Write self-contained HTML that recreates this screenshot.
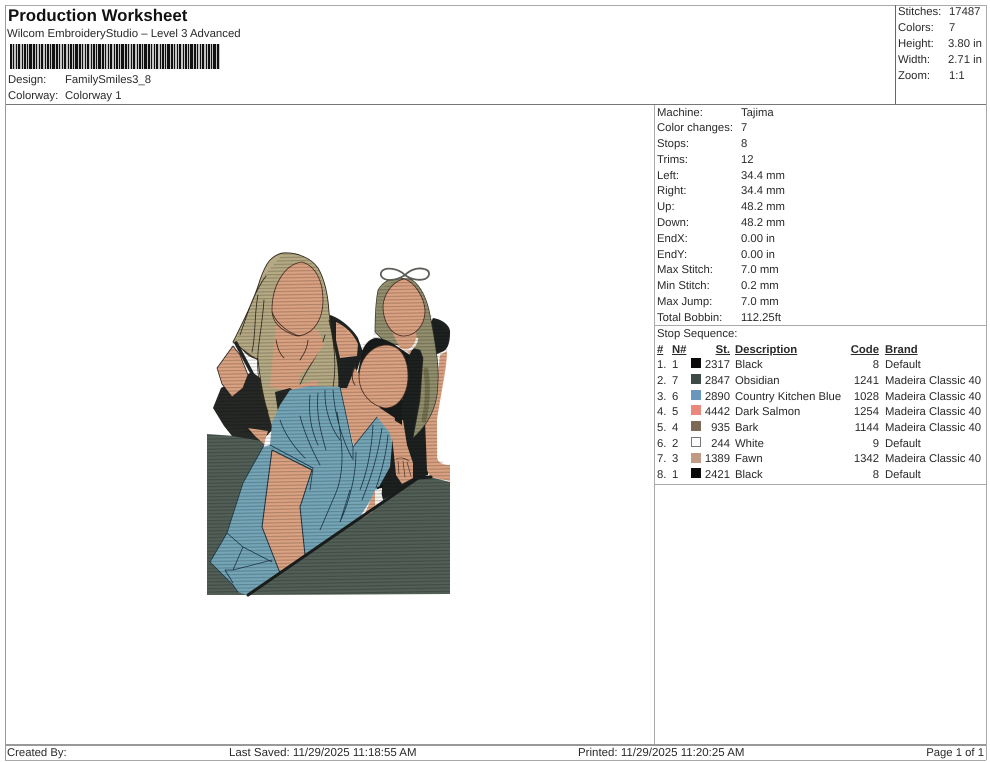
<!DOCTYPE html>
<html><head><meta charset="utf-8"><style>
html,body{margin:0;padding:0;background:#fff;width:990px;height:762px;overflow:hidden}
#p{position:relative;width:990px;height:762px;font-family:"Liberation Sans",Arial,sans-serif;font-size:11.3px;color:#2a2a2a;text-rendering:geometricPrecision}
.t{position:absolute;white-space:nowrap;line-height:14px;height:14px;filter:blur(.25px)}
.r{text-align:right}
.l{position:absolute;background:#8a8a8a}
.b{font-weight:bold;text-decoration:underline}
.s{position:absolute;width:10px;height:10px;box-sizing:border-box}
.f{font-size:11.5px}
</style></head><body><div id="p">
<div class="l" style="left:5px;top:5px;width:981px;height:1px;background:#aaa"></div>
<div class="l" style="left:5px;top:104px;width:981px;height:1px;background:#777"></div>
<div class="l" style="left:5px;top:5px;width:1px;height:755px;background:#999"></div>
<div class="l" style="left:986px;top:5px;width:1px;height:755px;background:#aaa"></div>
<div class="l" style="left:895px;top:5px;width:1px;height:99px;background:#666"></div>
<div class="l" style="left:654px;top:105px;width:1px;height:639px;background:#aaa"></div>
<div class="l" style="left:655px;top:325px;width:331px;height:1px;background:#aaa"></div>
<div class="l" style="left:655px;top:484px;width:331px;height:1px;background:#aaa"></div>
<div class="l" style="left:5px;top:744px;width:981px;height:2px;background:#999"></div>
<div class="l" style="left:5px;top:760px;width:981px;height:1px;background:#aaa"></div>

<div class="t" style="left:8px;top:6px;font-size:16.85px;font-weight:bold;line-height:20px;height:20px;color:#111">Production Worksheet</div>
<div class="t" style="left:7px;top:27px;font-size:11.4px">Wilcom EmbroideryStudio – Level 3 Advanced</div>
<svg style="position:absolute;left:10px;top:44px;filter:blur(.35px)" width="210" height="25"><defs><pattern id="bc" width="23" height="25" patternUnits="userSpaceOnUse"><rect width="23" height="25" fill="#c4c4c4"/><g fill="#111"><rect x="0" width="2" height="25"/><rect x="3" width="1" height="25"/><rect x="6" width="1" height="25"/><rect x="8" width="2" height="25"/><rect x="12" width="1" height="25"/><rect x="14" width="2" height="25"/><rect x="17" width="1" height="25"/><rect x="19" width="3" height="25"/></g></pattern></defs><rect width="210" height="25" fill="url(#bc)"/></svg>
<div class="t" style="left:8px;top:73px">Design:</div><div class="t" style="left:65px;top:73px">FamilySmiles3_8</div>
<div class="t" style="left:8px;top:89px">Colorway:</div><div class="t" style="left:65px;top:89px">Colorway 1</div>

<div class="t" style="left:898px;top:5px">Stitches:</div><div class="t" style="left:949px;top:5px">17487</div>
<div class="t" style="left:898px;top:21px">Colors:</div><div class="t" style="left:949px;top:21px">7</div>
<div class="t" style="left:898px;top:37px">Height:</div><div class="t" style="left:948px;top:37px">3.80 in</div>
<div class="t" style="left:898px;top:53px">Width:</div><div class="t" style="left:948px;top:53px">2.71 in</div>
<div class="t" style="left:898px;top:69px">Zoom:</div><div class="t" style="left:949px;top:69px">1:1</div>

<div class="t" style="left:657px;top:106px">Machine:</div><div class="t" style="left:741px;top:106px">Tajima</div>
<div class="t" style="left:657px;top:121px">Color changes:</div><div class="t" style="left:741px;top:121px">7</div>
<div class="t" style="left:657px;top:137px">Stops:</div><div class="t" style="left:741px;top:137px">8</div>
<div class="t" style="left:657px;top:153px">Trims:</div><div class="t" style="left:741px;top:153px">12</div>
<div class="t" style="left:657px;top:169px">Left:</div><div class="t" style="left:741px;top:169px">34.4 mm</div>
<div class="t" style="left:657px;top:184px">Right:</div><div class="t" style="left:741px;top:184px">34.4 mm</div>
<div class="t" style="left:657px;top:200px">Up:</div><div class="t" style="left:741px;top:200px">48.2 mm</div>
<div class="t" style="left:657px;top:216px">Down:</div><div class="t" style="left:741px;top:216px">48.2 mm</div>
<div class="t" style="left:657px;top:232px">EndX:</div><div class="t" style="left:741px;top:232px">0.00 in</div>
<div class="t" style="left:657px;top:248px">EndY:</div><div class="t" style="left:741px;top:248px">0.00 in</div>
<div class="t" style="left:657px;top:263px">Max Stitch:</div><div class="t" style="left:741px;top:263px">7.0 mm</div>
<div class="t" style="left:657px;top:279px">Min Stitch:</div><div class="t" style="left:741px;top:279px">0.2 mm</div>
<div class="t" style="left:657px;top:295px">Max Jump:</div><div class="t" style="left:741px;top:295px">7.0 mm</div>
<div class="t" style="left:657px;top:311px">Total Bobbin:</div><div class="t" style="left:741px;top:311px">112.25ft</div>
<div class="t" style="left:657px;top:327px">Stop Sequence:</div>

<div class="t b" style="left:657px;top:343px">#</div><div class="t b" style="left:672px;top:343px">N#</div><div class="t b r" style="left:690px;width:40px;top:343px">St.</div><div class="t b" style="left:735px;top:343px">Description</div><div class="t b r" style="left:840px;width:39px;top:343px">Code</div><div class="t b" style="left:885px;top:343px">Brand</div>

<div class="t" style="left:657px;top:358px">1.</div><div class="t" style="left:672px;top:358px">1</div><div class="s" style="left:691px;top:358px;background:#0a0a0a"></div><div class="t r" style="left:690px;width:40px;top:358px">2317</div><div class="t" style="left:735px;top:358px">Black</div><div class="t r" style="left:840px;width:39px;top:358px">8</div><div class="t" style="left:885px;top:358px">Default</div>
<div class="t" style="left:657px;top:374px">2.</div><div class="t" style="left:672px;top:374px">7</div><div class="s" style="left:691px;top:374px;background:#3f4a47"></div><div class="t r" style="left:690px;width:40px;top:374px">2847</div><div class="t" style="left:735px;top:374px">Obsidian</div><div class="t r" style="left:840px;width:39px;top:374px">1241</div><div class="t" style="left:885px;top:374px">Madeira Classic 40</div>
<div class="t" style="left:657px;top:390px">3.</div><div class="t" style="left:672px;top:390px">6</div><div class="s" style="left:691px;top:390px;background:#6b97bd"></div><div class="t r" style="left:690px;width:40px;top:390px">2890</div><div class="t" style="left:735px;top:390px">Country Kitchen Blue</div><div class="t r" style="left:840px;width:39px;top:390px">1028</div><div class="t" style="left:885px;top:390px">Madeira Classic 40</div>
<div class="t" style="left:657px;top:405px">4.</div><div class="t" style="left:672px;top:405px">5</div><div class="s" style="left:691px;top:405px;background:#e8897b"></div><div class="t r" style="left:690px;width:40px;top:405px">4442</div><div class="t" style="left:735px;top:405px">Dark Salmon</div><div class="t r" style="left:840px;width:39px;top:405px">1254</div><div class="t" style="left:885px;top:405px">Madeira Classic 40</div>
<div class="t" style="left:657px;top:421px">5.</div><div class="t" style="left:672px;top:421px">4</div><div class="s" style="left:691px;top:421px;background:#7d6a56"></div><div class="t r" style="left:690px;width:40px;top:421px">935</div><div class="t" style="left:735px;top:421px">Bark</div><div class="t r" style="left:840px;width:39px;top:421px">1144</div><div class="t" style="left:885px;top:421px">Madeira Classic 40</div>
<div class="t" style="left:657px;top:437px">6.</div><div class="t" style="left:672px;top:437px">2</div><div class="s" style="left:691px;top:437px;background:#fff;border:1px solid #777"></div><div class="t r" style="left:690px;width:40px;top:437px">244</div><div class="t" style="left:735px;top:437px">White</div><div class="t r" style="left:840px;width:39px;top:437px">9</div><div class="t" style="left:885px;top:437px">Default</div>
<div class="t" style="left:657px;top:452px">7.</div><div class="t" style="left:672px;top:452px">3</div><div class="s" style="left:691px;top:453px;background:#c09a84"></div><div class="t r" style="left:690px;width:40px;top:452px">1389</div><div class="t" style="left:735px;top:452px">Fawn</div><div class="t r" style="left:840px;width:39px;top:452px">1342</div><div class="t" style="left:885px;top:452px">Madeira Classic 40</div>
<div class="t" style="left:657px;top:468px">8.</div><div class="t" style="left:672px;top:468px">1</div><div class="s" style="left:691px;top:468px;background:#0a0a0a"></div><div class="t r" style="left:690px;width:40px;top:468px">2421</div><div class="t" style="left:735px;top:468px">Black</div><div class="t r" style="left:840px;width:39px;top:468px">8</div><div class="t" style="left:885px;top:468px">Default</div>

<div class="t f" style="left:7px;top:746px;font-size:11.3px">Created By:</div>
<div class="t f" style="left:229px;top:746px">Last Saved: 11/29/2025 11:18:55 AM</div>
<div class="t f" style="left:578px;top:746px">Printed: 11/29/2025 11:20:25 AM</div>
<div class="t r f" style="left:880px;width:104px;top:746px;font-size:11.3px">Page 1 of 1</div>

<svg style="position:absolute;left:0;top:0;filter:blur(.3px)" width="990" height="762" viewBox="0 0 990 762">
<defs><pattern id="st" width="4" height="3.4" patternUnits="userSpaceOnUse" patternTransform="rotate(-1)"><rect width="4" height="1.2" fill="#000" opacity=".2"/></pattern></defs>
<g stroke-linejoin="round" stroke-linecap="round">
<!-- green blocks -->
<path d="M207 434L265 438L247 595H207Z" fill="#525f57"/>
<path d="M248 595L418 478L430 477L450 482V594Z" fill="#525f57"/>
<!-- right girl: black top, dark hair behind -->
<path d="M433 318C441 319 451 325 450 333C450 342 448 348 444 351L437 354L428 475L418 478L383 500L376 470L392 420L402 400L410 352L423 340Z" fill="#1d2120"/>
<!-- right arm -->
<path d="M440 355L447 351C447 365 444 378 442 390C440 402 438 412 437 420V458C439 464 445 465 450 465V481L430 477L427 470L425 420L436 390Z" fill="#dba282"/>
<!-- left arm + hand -->
<path d="M390 420L403 420L407 445L413 463L413 478L402 484L396 475L394 455Z" fill="#dba282"/>
<path d="M396 459C400 457 405 458 409 461M398 461L399 474M403 461L405 477M407 462L411 476" fill="none" stroke="#5a3a2a" stroke-width=".7"/>
<!-- right girl hair -->
<path d="M397 278C388 279 382 283 378 290C376 300 375 315 375 332L385 342L420 350L423 358L420 400L413 438C424 428 434 415 437 395C439 378 438 362 436 350C434 335 431 320 429 310C426 296 418 282 410 279Z" fill="#928f6e" stroke="#34342a" stroke-width=".7"/>
<path d="M426 370C428 385 428 402 424 420" fill="none" stroke="#74724f" stroke-width="5"/>
<!-- right girl face and neck -->
<path d="M392 332L416 332L417 340L410 354L400 348Z" fill="#dba282"/>
<path d="M400 349C407 353 415 349 417 339" fill="none" stroke="#f2f0e8" stroke-width="2.4"/>
<path d="M383 306C384 293 394 280 405 279C415 283 424 297 425 310C425 325 416 336 403 336C391 335 383 322 383 306Z" fill="#dba282" stroke="#4a2e22" stroke-width=".8"/>
<!-- bow -->
<path d="M405 275C398 268 386 267 382 271C379 275 382 280 390 280C397 280 402 277 405 275C410 279 418 281 425 279C431 276 430 270 424 269C416 267 409 271 405 275Z" fill="#fff" stroke="#5e5e58" stroke-width="1.8"/>

<!-- left girl black top -->
<path d="M221 388L213 408L224 426L232 436L262 441L300 400L270 385L252 372Z" fill="#262826"/>
<path d="M330 315C340 318 352 328 358 338L363 352L350 392L328 392Z" fill="#1f2322"/>
<!-- left girl right shoulder skin -->
<path d="M336 322C345 326 353 333 358 344L357 356L340 358L336 340Z" fill="#dba282"/>
<path d="M248 428L268 431L264 444L255 436Z" fill="#dba282"/>
<!-- left girl hair -->
<path d="M283 253C272 255 266 262 260 280C254 300 243 322 233 342L250 355L258 360C260 380 264 400 268 414L272 428L285 398L320 398L338 395C340 382 338 360 334 345C332 332 330 322 329 312C328 295 325 280 318 268C311 258 297 252 283 253Z" fill="#b5aa84" stroke="#2f2a1f" stroke-width=".9"/>
<path d="M266 276C254 292 248 312 240 335M258 295C254 315 256 335 252 352M264 300C262 330 256 350 258 372C259 388 264 400 268 412M329 320C335 345 337 370 332 392M325 335C320 355 305 370 300 385" fill="none" stroke="#2f2a1f" stroke-width=".8"/>
<!-- left shoulder + strap -->
<path d="M233 346L217 368L222 384L232 397L243 388L248 375L240 355Z" fill="#dba282" stroke="#2a2420" stroke-width=".8"/>
<path d="M236 343L254 377" stroke="#262826" stroke-width="3.5" fill="none"/>
<path d="M243 350C247 355 252 358 258 359" fill="none" stroke="#2f2a1f" stroke-width="1"/>
<!-- left girl chest -->
<path d="M276 325L318 330L324 345C318 352 312 365 300 375L298 385L317 380L318 388L295 392L270 387C272 365 274 345 276 325Z" fill="#dba282"/>
<path d="M272 310C272 285 285 264 302 262C316 266 323 282 323 300C323 320 313 335 297 336C284 332 272 325 272 310Z" fill="#dba282" stroke="#4a2e22" stroke-width=".8"/>
<path d="M272 312C276 323 288 333 300 336M276 340C278 350 280 354 284 358M308 340C307 350 303 355 300 360" fill="none" stroke="#3a2a1f" stroke-width=".8"/>
<path d="M275 392L290 388L300 395L278 412Z" fill="#262826"/>

<!-- man hair & body -->
<path d="M362 352C364 345 370 338 376 338C382 338 388 341 392 343L410 355L402 395L402 425L370 405L358 372Z" fill="#191c1c"/>
<path d="M347 388L355 368L372 395L380 408L395 418L391 450L354 447L340 388Z" fill="#dba282"/>
<path d="M355 367C352 372 351 380 355 385" fill="none" stroke="#5a3a2a" stroke-width="1"/>
<path d="M359 376C360 358 372 345 387 345C402 346 408 360 408 376C408 395 398 408 385 408C372 406 359 394 359 376Z" fill="#dba282" stroke="#4a2e22" stroke-width=".8"/>

<!-- shirt -->
<path d="M272 423L280 405L290 390L310 386L340 387L353 447L377 417L390 433L392 445L390 467L380 485L360 517L330 537L305 555L280 573L247 595L238 592L233 585L210 562L227 533L243 483L263 447L270 445Z" fill="#74a6b8"/>
<path d="M363 518L375 490L382 488L381 503L372 512Z" fill="#dba282"/>
<path d="M375 490L382 488L381 503L375 508Z" fill="#f6f4ee"/>
<!-- arm -->
<path d="M272 450L312 470L300 507L305 555L280 573L262 527Z" fill="#dba282" stroke="#1f3340" stroke-width="1"/>
<g fill="none" stroke="#1e3a4a" stroke-width=".8">
<path d="M263 447L243 483L227 533L210 562L233 585L238 592"/>
<path d="M227 533L243 547L272 562M243 547L233 570L225 570L233 583M233 570L272 560"/>
<path d="M270 445L313 468L310 490"/>
<path d="M280 420C285 435 295 448 305 458M300 416C305 435 312 450 320 465M310 395C308 415 312 432 318 445M318 393C316 412 320 430 326 450M325 390C324 410 332 430 340 440"/>
<path d="M333 390C335 420 345 445 352 458M340 387L353 447L353 460M337 412C342 440 346 470 335 495L320 530"/>
<path d="M353 447L377 417M373 425C372 445 368 470 360 490M382 428C378 455 372 475 362 500M388 435C386 455 382 470 376 488M350 490L340 522M356 452C356 475 350 500 340 522"/>
</g>
<path d="M378 488L382 486" stroke="#111" stroke-width="2"/>
<!-- diagonal -->
<path d="M248 595L418 478L431 477" fill="none" stroke="#1a1e1d" stroke-width="3"/>
</g>
<path d="M207 434L263 440L225 425L213 408L222 385L217 368L233 343L253 298L262 278L283 254L300 254L318 268L328 300L330 315L362 345L373 338L375 325L378 290L397 279L410 280L423 290L430 312L433 319L450 332L447 352L437 420L438 460L450 465V594H207Z" fill="url(#st)"/>
</svg>
</div></body></html>
